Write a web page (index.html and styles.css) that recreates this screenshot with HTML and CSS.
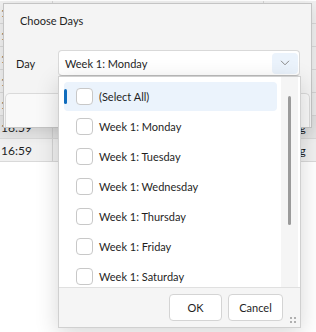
FILE: index.html
```html
<!DOCTYPE html>
<html>
<head>
<meta charset="utf-8">
<link rel="stylesheet" href="styles.css">
</head>
<body>
<div class="grid">
  <div class="row"><div class="c1">1</div><div class="c2"></div><div class="c3">Closing</div></div>
  <div class="row"><div class="c1">1</div><div class="c2"></div><div class="c3">Closing</div></div>
  <div class="row"><div class="c1">1</div><div class="c2"></div><div class="c3">Closing</div></div>
  <div class="row"><div class="c1">1</div><div class="c2"></div><div class="c3">Closing</div></div>
  <div class="row"><div class="c1">1</div><div class="c2"></div><div class="c3">Closing</div></div>
  <div class="row hot"><div class="c1">16:59</div><div class="c2"></div><div class="c3">Closing</div></div>
  <div class="row"><div class="c1">16:59</div><div class="c2"></div><div class="c3">Closing</div></div>
</div>

<div class="dialog">
  <div class="dlg-title">Choose Days</div>
  <div class="dlg-body">
    <div class="lbl">Day</div>
    <div class="combo">
      <div class="combo-text">Week 1: Monday</div>
      <div class="drop">
        <svg width="10" height="6" viewBox="0 0 10 6"><path d="M1 0.8 L5 4.8 L9 0.8" fill="none" stroke="#8a8a8a" stroke-width="1"/></svg>
      </div>
    </div>
  </div>
  <div class="dlg-foot"></div>
</div>

<div class="popup">
  <div class="list-wrap">
    <div class="list">
      <div class="item sel"><span class="cb"></span><span>(Select All)</span></div>
      <div class="item"><span class="cb"></span><span>Week 1: Monday</span></div>
      <div class="item"><span class="cb"></span><span>Week 1: Tuesday</span></div>
      <div class="item"><span class="cb"></span><span>Week 1: Wednesday</span></div>
      <div class="item"><span class="cb"></span><span>Week 1: Thursday</span></div>
      <div class="item"><span class="cb"></span><span>Week 1: Friday</span></div>
      <div class="item"><span class="cb"></span><span>Week 1: Saturday</span></div>
    </div>
    <div class="scroll"><div class="thumb"></div></div>
  </div>
  <div class="pop-foot">
    <div class="btn ok">OK</div>
    <div class="btn cancel">Cancel</div>
  </div>
  <svg class="grip" width="7" height="7" viewBox="0 0 7 7">
    <rect x="0" y="0" width="2" height="2" fill="#b0b0b0"/>
    <rect x="4" y="0" width="2" height="2" fill="#b0b0b0"/>
    <rect x="0" y="4" width="2" height="2" fill="#b0b0b0"/>
    <rect x="4" y="4" width="2" height="2" fill="#b0b0b0"/>
  </svg>
</div>
</body>
</html>
```

FILE: styles.css
```css
* { box-sizing: border-box; }
html, body {
  margin: 0;
  padding: 0;
}
body {
  width: 316px;
  height: 332px;
  overflow: hidden;
  position: relative;
  background: #ffffff;
  font-family: Lato, "Liberation Sans", sans-serif;
  font-size: 11px;
  color: #1f1f1f;
}

/* background grid */
.grid {
  padding-top: 1px;
}
.row {
  display: flex;
  height: 23px;
  background: #f0f0f0;
  border-bottom: 1px solid #d9d9d9;
}
.row.hot { background: #e6e6e6; }
.row > div {
  display: flex;
  align-items: center;
  white-space: nowrap;
  overflow: hidden;
  font-size: 12px;
}
.c1 {
  width: 53px;
  padding-left: 1px;
  border-right: 1px solid #d4d4d4;
}
.c2 {
  width: 211px;
  border-right: 1px solid #d4d4d4;
}
.c3 {
  flex: 1;
  padding-left: 3px;
}

/* dialog */
.dialog {
  position: absolute;
  left: 3px;
  top: 3px;
  width: 309px;
  height: 125px;
  border: 1px solid #c4c4c4;
  background: #f4f4f4;
  box-shadow: 0 4px 14px rgba(0, 0, 0, 0.12);
  display: flex;
  flex-direction: column;
}
.dlg-title {
  height: 16px;
  line-height: 16px;
  margin-top: 9px;
  padding-left: 16px;
}
.dlg-body {
  display: flex;
  align-items: center;
  margin-top: 21px;
  padding-left: 12px;
}
.lbl {
  width: 42px;
}
.combo {
  width: 242px;
  height: 26px;
  background: #ffffff;
  border: 1px solid #d9d9d9;
  border-bottom-color: #bdbdbd;
  border-radius: 4px;
  display: flex;
  align-items: center;
}
.combo-text {
  flex: 1;
  padding-left: 6px;
}
.drop {
  width: 26px;
  height: 21px;
  margin-right: 1px;
  background: #ebf3fc;
  border-radius: 4px;
  display: flex;
  align-items: center;
  justify-content: center;
}
.dlg-foot {
  flex: 1;
  margin: 17px 1px 0 1px;
  border: 1px solid #dadada;
  border-bottom: none;
  border-radius: 5px 5px 0 0;
  background: #f9f9f9;
}

/* dropdown popup */
.popup {
  position: absolute;
  left: 58px;
  top: 76px;
  width: 243px;
  height: 252px;
  background: #ffffff;
  border: 1px solid #d0d0d0;
  box-shadow: 0 6px 22px rgba(0, 0, 0, 0.16);
  display: flex;
  flex-direction: column;
}
.list-wrap {
  height: 210px;
  display: flex;
}
.list {
  flex: 1;
  padding: 5px 4px 0 5px;
  overflow: hidden;
}
.item {
  position: relative;
  height: 29px;
  margin-bottom: 1px;
  display: flex;
  align-items: center;
  padding-left: 12px;
  border-radius: 4px;
  white-space: nowrap;
}
.item.sel { background: #ebf3fc; }
.item.sel::before {
  content: "";
  position: absolute;
  left: 0;
  top: 7px;
  width: 3px;
  height: 15px;
  border-radius: 2px;
  background: #0f6cbd;
}
.cb {
  width: 17px;
  height: 17px;
  border: 1px solid #c8c8c8;
  border-radius: 4px;
  background: #ffffff;
  margin-right: 6px;
  flex: none;
}
.scroll {
  width: 17px;
  margin-right: 2px;
  background: #f5f5f5;
  padding: 19px 0 0 7px;
}
.thumb {
  width: 3px;
  height: 129px;
  border-radius: 2px;
  background: #9b9b9b;
}
.pop-foot {
  flex: 1;
  background: #f5f5f5;
  border-top: 1px solid #e0e0e0;
  display: flex;
  justify-content: flex-end;
  align-items: center;
  gap: 6px;
  padding-right: 17px;
}
.btn {
  height: 27px;
  background: #ffffff;
  border: 1px solid #d4d4d4;
  border-radius: 4px;
  display: flex;
  align-items: center;
  justify-content: center;
}
.btn.ok { width: 53px; }
.btn.cancel { width: 55px; }
.grip {
  position: absolute;
  right: 3px;
  bottom: 3px;
}
```
